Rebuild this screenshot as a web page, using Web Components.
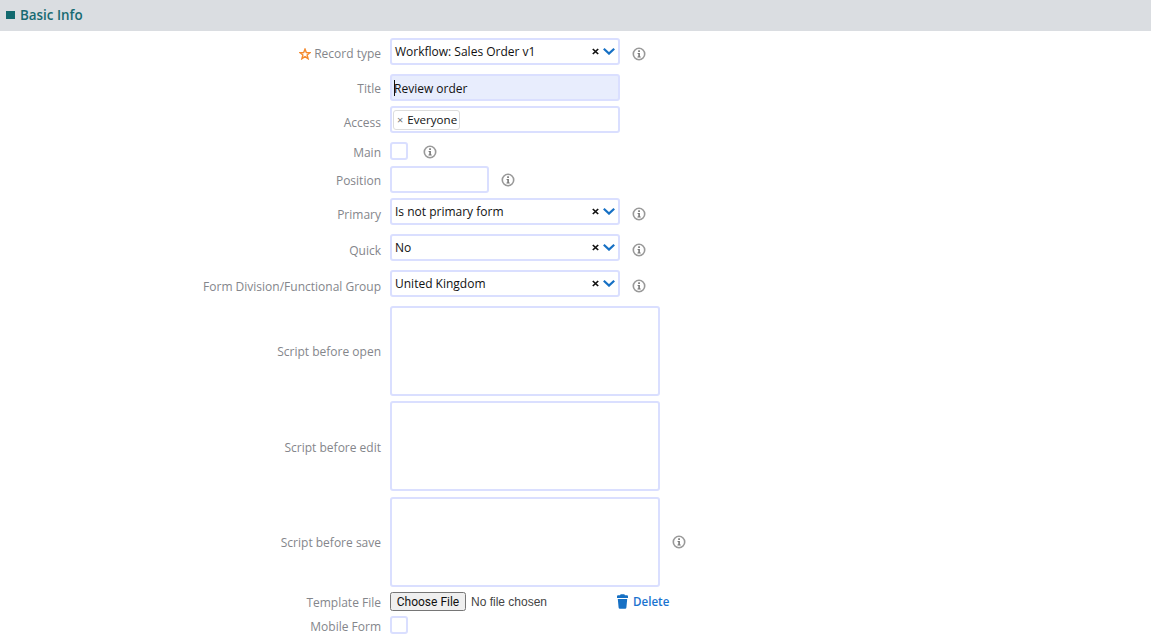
<!DOCTYPE html>
<html lang="en"><head><meta charset="utf-8"><title>Basic Info</title>
<style>
html,body{margin:0;padding:0;background:#fff;overflow:hidden}
body{font:12px "Open Sans","Noto Sans",sans-serif;color:#111}
</style></head><body>
<x-form-page>
  <x-section-header slot="header">Basic Info</x-section-header>
  <x-form-row top="7" h="27" lo="4" star label="Record type" after="12"><x-select>Workflow: Sales Order v1</x-select><x-info o="2"></x-info></x-form-row>
  <x-form-row top="9" h="27" lo="3" label="Title"><x-text w="230" filled caret>Review order</x-text></x-form-row>
  <x-form-row top="5" h="27" lo="7" label="Access"><x-text w="230"><x-tag>Everyone</x-tag></x-text></x-form-row>
  <x-form-row top="9" h="18" lo="3" label="Main" after="15"><x-check></x-check><x-info o="1"></x-info></x-form-row>
  <x-form-row top="6" h="27" lo="3" label="Position" after="12"><x-text w="99"></x-text><x-info o="0"></x-info></x-form-row>
  <x-form-row top="5" h="27" lo="7" label="Primary" after="12"><x-select>Is not primary form</x-select><x-info o="2"></x-info></x-form-row>
  <x-form-row top="9" h="27" lo="7" label="Quick" after="12"><x-select>No</x-select><x-info o="2"></x-info></x-form-row>
  <x-form-row top="9" h="27" lo="7" label="Form Division/Functional Group" after="12"><x-select>United Kingdom</x-select><x-info o="2"></x-info></x-form-row>
  <x-form-row top="9" h="90" lo="2" label="Script before open"><x-area></x-area></x-form-row>
  <x-form-row top="5" h="90" lo="3" label="Script before edit"><x-area></x-area></x-form-row>
  <x-form-row top="6" h="90" lo="2" label="Script before save" after="12"><x-area></x-area><x-info o="0"></x-info></x-form-row>
  <x-form-row top="5" h="19" lo="3" label="Template File"><x-file></x-file></x-form-row>
  <x-form-row top="5" h="18" lo="3" label="Mobile Form"><x-check></x-check></x-form-row>
</x-form-page>
<script>
function def(name, css, html, init){
  customElements.define(name, class extends HTMLElement{
    constructor(){super();const r=this.attachShadow({mode:'open'});r.innerHTML='<style>'+css+'</style>'+html;}
    connectedCallback(){if(init)init(this,this.shadowRoot);}
  });
}
const FIELD='box-sizing:border-box;border:2px solid #dadfff;border-radius:3px;background:#fff;';
def('x-form-page',':host{display:block;width:1151px;height:642px;overflow:hidden}','<slot name="header"></slot><slot></slot>');
def('x-section-header',`:host{display:flex;align-items:center;gap:5px;height:31px;box-sizing:border-box;padding:0 0 1px 6px;background:#dadde1;color:#176a72;font:600 13.4px/18px "Open Sans",sans-serif}
i{display:block;width:9px;height:8px;background:#11696f}`,'<i></i><span style="margin-bottom:1px"><slot></slot></span>');
def('x-form-row',`:host{display:flex;align-items:center}
.l{box-sizing:border-box;width:381px;flex:none;color:#84868b;font:12px/16px "Open Sans",sans-serif;white-space:nowrap;display:flex;justify-content:flex-end;align-items:center;gap:3px;margin-top:var(--lo,0)}
.l svg{display:none}
:host([star]) .l svg{display:block}
.f{margin-left:9px;display:flex;align-items:center}`,
`<div class="l"><svg width="12" height="12" viewBox="0 0 12 12" fill="none" stroke="#f58a2e" stroke-width="1.400" stroke-linejoin="miter"><path d="M6 1.100 7.300 4.500 11 4.700 8.100 7 9.100 10.700 6 8.600 2.900 10.700 3.900 7 1 4.700 4.700 4.500z"/></svg><span id="t"></span></div><div class="f"><slot></slot></div>`,
(h,r)=>{r.getElementById('t').textContent=h.getAttribute('label');
 h.style.marginTop=h.getAttribute('top')+'px';h.style.height=h.getAttribute('h')+'px';
 h.style.setProperty('--lo',h.getAttribute('lo')+'px');
 const a=h.getAttribute('after'); if(a) h.style.setProperty('--after',a+'px');});
def('x-select',`:host{display:flex;align-items:center;${FIELD}width:230px;height:27px;padding:0 3px;color:#111;font:12px/16px "Open Sans",sans-serif;white-space:nowrap}
span{flex:1}
svg{display:block;flex:none}`,
`<span><slot></slot></span><svg width="7" height="7" viewBox="0 0 7 7" stroke="#111" stroke-width="1.700"><path d="M.8 1 6.200 6M6.200 1 .8 6"/></svg><svg style="margin-left:4px" width="12" height="7" viewBox="0 0 12 7" fill="none" stroke="#1670c4" stroke-width="2.200"><path d="M.8.8 6 5.600 11.200.8"/></svg>`);
def('x-text',`:host{display:flex;align-items:center;position:relative;${FIELD}height:27px;padding:1px 1px 0;color:#111;font:12px/16px "Open Sans",sans-serif;white-space:nowrap}
:host([filled]){background:#e8edfd;padding-top:2px}
i{display:none;position:absolute;left:2px;top:4px;width:1px;height:16px;background:#111}
:host([caret]) i{display:block}
span{display:block}
:host([caret]) span{margin-left:1px}`,'<i></i><span><slot></slot></span>',
(h)=>{h.style.width=h.getAttribute('w')+'px';});
def('x-tag',`:host{display:flex;align-items:center;box-sizing:border-box;height:20px;padding:0 2px 0 3px;border:1px solid #ddd;border-radius:3px;font:11.6px/16px "Open Sans",sans-serif;color:#111}
b{font-weight:400;color:#777;margin-right:4px;font-size:11px}`,'<b>×</b><slot></slot>');
def('x-check',`:host{display:block;${FIELD}width:18px;height:18px}`,'');
def('x-area',`:host{display:block;${FIELD}width:270px;height:90px}`,'');
def('x-info',`:host{display:block;margin-left:var(--after,12px);width:14px;height:14px}
svg{display:block}`,
`<svg width="14" height="14" viewBox="0 0 14 14"><circle cx="7" cy="7" r="5.700" fill="none" stroke="#999" stroke-width="1.600"/><rect x="6.200" y="3.300" width="1.700" height="1.700" fill="#777"/><path d="M5.600 6H7.900V9.600H8.700V10.600H5.500V9.600H6.300V7H5.600z" fill="#777"/></svg>`,
(h)=>{h.style.marginTop=(2*(+h.getAttribute('o')||0))+'px';});
def('x-file',`:host{display:flex;align-items:center;width:280px;font:12px "Liberation Sans",Arial,sans-serif}
input{font:12px/15px "Liberation Sans",Arial,sans-serif;width:200px;margin:0;color:#444}
input::file-selector-button{font:12px "Roboto",sans-serif;box-sizing:border-box;width:76px;height:19px;padding:0;margin-right:5px;color:#111}
a{display:flex;align-items:center;gap:5px;margin-left:27px;color:#1a73cf;font:600 11.6px/16px "Open Sans",sans-serif;text-decoration:none}`,
`<input type="file"><a><svg width="11" height="15" viewBox="0 0 11 15" fill="#1670c4"><path d="M4 .2h3q.8 0 .9 1.100H10q1 0 1 1.200V4H0V2.500q0-1.200 1-1.200h2.100Q3.200.2 4 .2z"/><path d="M.8 5h9.400L9.400 13.600q-.1 1.200-1.300 1.200H2.900q-1.200 0-1.300-1.200z"/></svg>Delete</a>`);
</script></body></html>
